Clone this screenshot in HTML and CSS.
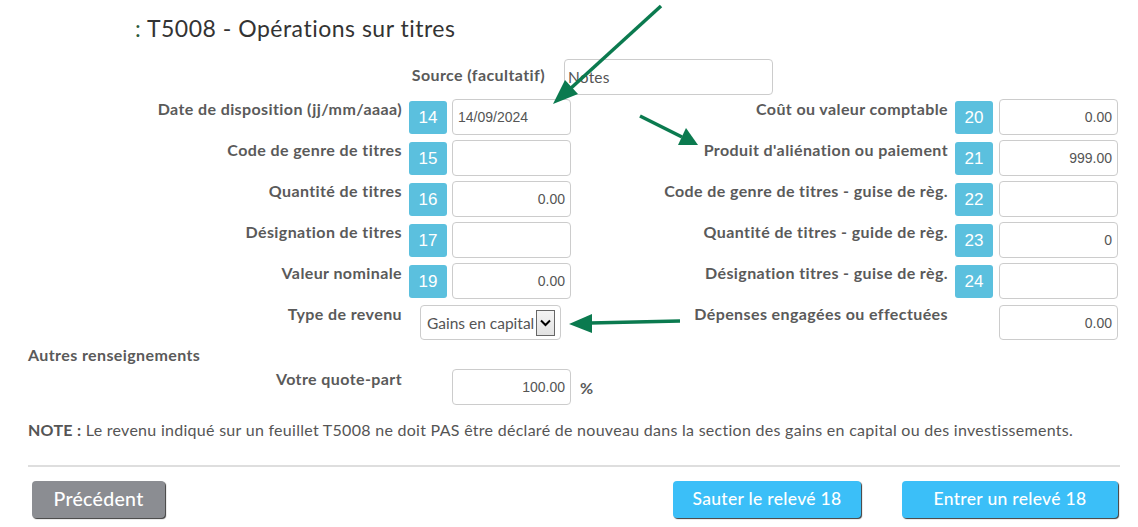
FILE: index.html
```html
<!DOCTYPE html>
<html lang="fr">
<head>
<meta charset="utf-8">
<title>T5008 - Opérations sur titres</title>
<link rel="stylesheet" href="styles.css">
</head>
<body>
<div class="page">
  <h1 class="title"><span class="colon">:</span> T5008 - Opérations sur titres</h1>

  <div class="source-row">
    <div class="label source-label">Source (facultatif)</div>
    <div class="input source-input">Notes</div>
  </div>

  <div class="row">
    <div class="field-l">
      <div class="label lbl-l">Date de disposition (jj/mm/aaaa)</div>
      <div class="badge">14</div>
      <div class="input num left">14/09/2024</div>
    </div>
    <div class="field-r">
      <div class="label lbl-r">Coût ou valeur comptable</div>
      <div class="badge">20</div>
      <div class="input num">0.00</div>
    </div>
  </div>

  <div class="row">
    <div class="field-l">
      <div class="label lbl-l">Code de genre de titres</div>
      <div class="badge">15</div>
      <div class="input num"></div>
    </div>
    <div class="field-r">
      <div class="label lbl-r">Produit d'aliénation ou paiement</div>
      <div class="badge">21</div>
      <div class="input num">999.00</div>
    </div>
  </div>

  <div class="row">
    <div class="field-l">
      <div class="label lbl-l">Quantité de titres</div>
      <div class="badge">16</div>
      <div class="input num">0.00</div>
    </div>
    <div class="field-r">
      <div class="label lbl-r">Code de genre de titres - guise de règ.</div>
      <div class="badge">22</div>
      <div class="input num"></div>
    </div>
  </div>

  <div class="row">
    <div class="field-l">
      <div class="label lbl-l">Désignation de titres</div>
      <div class="badge">17</div>
      <div class="input num"></div>
    </div>
    <div class="field-r">
      <div class="label lbl-r">Quantité de titres - guide de règ.</div>
      <div class="badge">23</div>
      <div class="input num">0</div>
    </div>
  </div>

  <div class="row">
    <div class="field-l">
      <div class="label lbl-l">Valeur nominale</div>
      <div class="badge">19</div>
      <div class="input num">0.00</div>
    </div>
    <div class="field-r">
      <div class="label lbl-r">Désignation titres - guise de règ.</div>
      <div class="badge">24</div>
      <div class="input num"></div>
    </div>
  </div>

  <div class="row">
    <div class="field-l">
      <div class="label lbl-l">Type de revenu</div>
      <div class="select">
        <span class="select-text">Gains en capital</span>
        <span class="select-btn">
          <svg width="11" height="8" viewBox="0 0 11 8"><path d="M1 1.5 L5.5 6 L10 1.5" fill="none" stroke="#000" stroke-width="2"/></svg>
        </span>
      </div>
    </div>
    <div class="field-r">
      <div class="label lbl-r">Dépenses engagées ou effectuées</div>
      <div class="input num wide-gap">0.00</div>
    </div>
  </div>

  <div class="section-title">Autres renseignements</div>

  <div class="row">
    <div class="field-l">
      <div class="label lbl-l">Votre quote-part</div>
      <div class="input num share">100.00</div>
      <span class="pct">%</span>
    </div>
  </div>

  <p class="note"><b>NOTE :</b> Le revenu indiqué sur un feuillet T5008 ne doit PAS être déclaré de nouveau dans la section des gains en capital ou des investissements.</p>

  <hr class="sep">

  <div class="buttons">
    <button class="btn btn-grey">Précédent</button>
    <div class="btn-group">
      <button class="btn btn-blue btn-skip">Sauter le relevé 18</button>
      <button class="btn btn-blue btn-enter">Entrer un relevé 18</button>
    </div>
  </div>

  <svg class="arrows" width="1138" height="527" viewBox="0 0 1138 527">
    <g stroke="#0b7a4f" stroke-width="3.5" fill="none">
      <line x1="661" y1="6" x2="570" y2="89"/>
      <line x1="640" y1="116" x2="682" y2="137"/>
      <line x1="680" y1="321" x2="590" y2="323"/>
    </g>
    <g fill="#0b7a4f">
      <polygon points="553,104 565,80 578,94"/>
      <polygon points="698,145 678,145 686,128"/>
      <polygon points="569,324 592,314 592,333"/>
    </g>
  </svg>
</div>
</body>
</html>
```

FILE: styles.css
```css
* { box-sizing: border-box; }

html, body {
  margin: 0;
  padding: 0;
  background: #fff;
}

body {
  font-family: Lato, "Open Sans", sans-serif;
  color: #555;
  width: 1138px;
  height: 527px;
  overflow: hidden;
}

.page {
  position: relative;
  padding: 14px 18px 0 28px;
}

.title {
  margin: 0 0 17px 107px;
  font-size: 23px;
  line-height: 28px;
  font-weight: 400;
  color: #333;
  letter-spacing: 0.5px;
}

.colon { color: #2c5a3a; }

.label {
  font-size: 16px;
  line-height: 20px;
  font-weight: 700;
  letter-spacing: 0.4px;
  color: #5a5a5a;
  white-space: nowrap;
}

.source-row {
  display: flex;
  height: 35px;
  margin-bottom: 5px;
}

.source-label {
  width: 517px;
  text-align: right;
  padding-top: 6px;
}

.source-input {
  margin-left: 19px;
  width: 209px;
  height: 35px;
  padding-left: 3px;
  font-family: Lato, sans-serif;
  font-size: 15.5px;
  letter-spacing: 0.2px;
  color: #555;
}

.row {
  display: flex;
  height: 36px;
  margin-bottom: 5px;
}

.field-l {
  display: flex;
  align-items: flex-start;
  width: 543px;
  flex-shrink: 0;
}

.field-r {
  display: flex;
  align-items: flex-start;
  width: 547px;
  flex-shrink: 0;
}

.field-l > *, .field-r > .badge, .field-r > .input { flex-shrink: 0; }

.lbl-l {
  width: 374px;
  text-align: right;
}

.lbl-r {
  flex: 1;
  text-align: right;
}

.badge {
  margin-top: 2px;
  margin-left: 7px;
  width: 38px;
  height: 33px;
  border-radius: 3px;
  background: #5bc0de;
  color: #fff;
  font-family: "Liberation Sans", Arial, sans-serif;
  font-size: 17px;
  line-height: 33px;
  text-align: center;
}

.field-r .badge + .input { margin-left: 6px; }

.input {
  height: 36px;
  border: 1px solid #ccc;
  border-radius: 4px;
  background: #fff;
  display: flex;
  align-items: center;
}

.num {
  margin-left: 5px;
  width: 119px;
  justify-content: flex-end;
  padding: 0 5px;
  font-family: "Liberation Sans", Arial, sans-serif;
  font-size: 14px;
  color: #555;
}

.num.left { justify-content: flex-start; }

.num.wide-gap {
  margin-left: 51px;
  height: 35px;
  margin-top: 1px;
}

.select {
  margin-left: 18px;
  margin-top: 1px;
  width: 141px;
  height: 35px;
  border: 1px solid #ccc;
  border-radius: 4px;
  display: flex;
  align-items: center;
  padding-left: 6px;
}

.select-text {
  font-size: 15.5px;
  color: #555;
  white-space: nowrap;
}

.select-btn {
  margin-left: 2px;
  width: 19px;
  height: 26px;
  border: 1px solid #666;
  background: linear-gradient(#f4f4f4, #e2e2e2);
  display: flex;
  align-items: center;
  justify-content: center;
}

.section-title {
  font-size: 16px;
  line-height: 20px;
  font-weight: 700;
  letter-spacing: 0.4px;
  color: #5a5a5a;
  height: 24px;
}

.num.share {
  margin-left: 50px;
}

.pct {
  align-self: center;
  margin-left: 9px;
  font-size: 16px;
  font-weight: 700;
  color: #5a5a5a;
}

.note {
  margin: 15px 0 0;
  font-size: 16px;
  line-height: 20px;
  letter-spacing: 0.28px;
  color: #555;
  white-space: nowrap;
}

.note b { font-weight: 700; }

.sep {
  margin: 25px 0 0;
  border: 0;
  border-top: 2px solid #dedede;
  width: 1092px;
}

.buttons {
  display: flex;
  justify-content: space-between;
  margin-top: 14px;
  width: 1090px;
}

.btn {
  height: 37px;
  border: 0;
  border-radius: 4px;
  color: #fff;
  font-family: Lato, sans-serif;
  font-weight: 500;
  letter-spacing: 0.3px;
  padding: 0 0 3px;
  box-shadow: 1px 1px 1px #3a3a3a;
}

.btn-grey {
  margin-left: 4px;
  width: 133px;
  background: #8b8d92;
  font-size: 19.5px;
}

.btn-group {
  display: flex;
  gap: 41px;
}

.btn-blue {
  background: #3bbff8;
  font-size: 17.5px;
}
.btn-skip { width: 188px; }
.btn-enter { width: 216px; }

.arrows {
  position: absolute;
  left: 0;
  top: 0;
  pointer-events: none;
}
```
